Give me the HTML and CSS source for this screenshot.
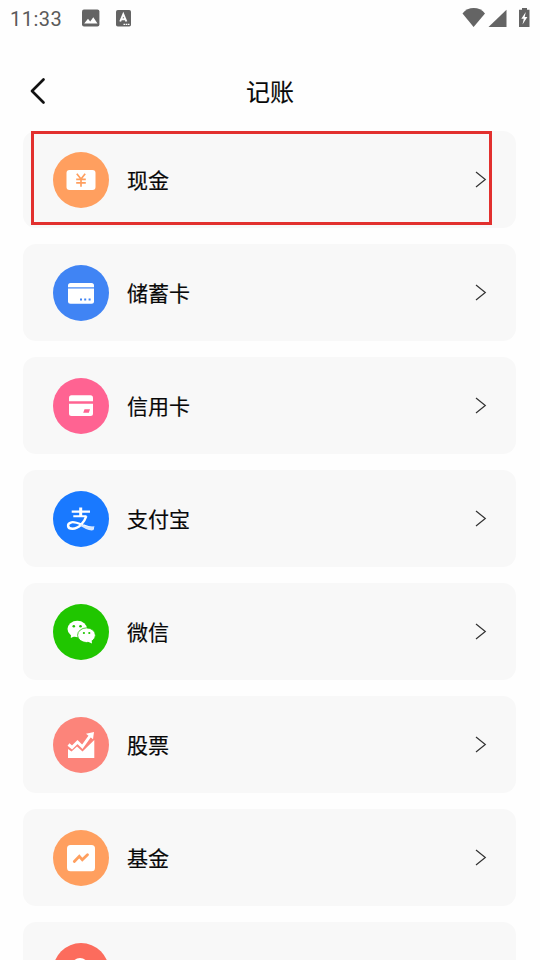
FILE: index.html
```
<!DOCTYPE html>
<html lang="zh-CN">
<head>
<meta charset="utf-8">
<title>记账</title>
<link rel="stylesheet" href="styles.css">
</head>
<body>
<div class="status">
  <span class="time">11:33</span>
  <svg class="photo" width="18" height="18" viewBox="0 0 18 18"><rect y=".5" width="17.400" height="17" rx="2" fill="#646464"/><path d="M2.200 14.500 6 9.700 8.200 12.500 11.300 8.300 15.500 14.500Z" fill="#fff"/></svg>
  <svg class="lang" width="16" height="17" viewBox="0 0 16 17"><rect width="15" height="16.500" rx="1.800" fill="#646464"/><path d="M4.200 11.500 7.300 4.200 10.400 11.500M5.400 9.300H9.200" fill="none" stroke="#fff" stroke-width="1.900"/><path d="M7.500 14.300H14" stroke="#fff" stroke-width="1.200" stroke-dasharray="1.600 .6"/></svg>
  <svg class="system" width="70" height="22" viewBox="0 0 70 22"><g fill="#646464"><path d="M.5 6.500C6-.7 17.500-.7 23 6.500L11.600 20Z"/><path d="M26.500 20 44.500 2.700V20Z"/><path d="M57 2.700H60V1H65V2.700H67.500V20H57Z"/></g><path d="M63.800 5 59.300 11.800H61.800L60.500 17.500 65.400 10H62.700Z" fill="#fff"/></svg>
</div>
<header class="header">
  <svg class="back" width="18" height="28" viewBox="0 0 18 28"><path d="M15.500 2.500 4 14 15.500 25.500" fill="none" stroke="#111" stroke-width="2.700" stroke-linecap="round" stroke-linejoin="round"/></svg>
  <h1>记账</h1>
</header>
<main class="list">
  <div class="card">
    <svg class="icon" viewBox="0 0 56 56"><circle cx="28" cy="28" r="28" fill="#ff9f5f"/><rect x="13.500" y="18" width="29" height="20" rx="3" fill="#fff"/><path d="M23.800 21.800 28 27 32.200 21.800M28 27V34.700M23.200 27.300H32.800M23.200 30.800H32.800" fill="none" stroke="#ff9f5f" stroke-width="1.700"/></svg>
    <span class="name">现金</span>
    <svg class="arrow" viewBox="0 0 12 18"><path d="M1 1 10.300 8.500 1 16"/></svg>
    <div class="highlight"></div>
  </div>
  <div class="card">
    <svg class="icon" viewBox="0 0 56 56"><circle cx="28" cy="28" r="28" fill="#4084f4"/><rect x="15" y="18" width="26" height="20.700" rx="2.500" fill="#fff"/><path d="M15 22.900H41" stroke="#4084f4" stroke-width="1.200"/><path d="M27 33.500h2v2h-2zM31.200 33.500h2v2h-2zM35.600 33.500h2v2h-2z" fill="#4084f4"/></svg>
    <span class="name">储蓄卡</span>
    <svg class="arrow" viewBox="0 0 12 18"><path d="M1 1 10.300 8.500 1 16"/></svg>
  </div>
  <div class="card">
    <svg class="icon" viewBox="0 0 56 56"><circle cx="28" cy="28" r="28" fill="#ff6392"/><path d="M16 23.300V20Q16 17.200 18.500 17.200H37.500Q40 17.200 40 20V23.300ZM16 25.800H40V35.500Q40 38 37.500 38H18.500Q16 38 16 35.500Z" fill="#fff"/><path d="M31.500 31.200H37L35.800 34.800H30.200Z" fill="#ff6392"/></svg>
    <span class="name">信用卡</span>
    <svg class="arrow" viewBox="0 0 12 18"><path d="M1 1 10.300 8.500 1 16"/></svg>
  </div>
  <div class="card">
    <svg class="icon" viewBox="0 0 56 56"><circle cx="28" cy="28" r="28" fill="#1979ff"/><g fill="none" stroke="#fff"><path d="M18.700 20.600H37M20.300 25.200H33.500" stroke-width="2.100"/><path d="M27.700 16.500V25" stroke-width="3"/><path d="M33.300 25.200C31.500 31 26 37.800 19.500 37.800 14 37.800 13.500 32.500 18.500 31.300 24.500 30 31 36.500 41 37.200" stroke-width="2.400"/></g><path d="M28 33.300C33 36 37 35.800 41.500 35.300L40.200 39.300C36 40 31.500 37.500 27.500 35Z" fill="#d6e7ff"/></svg>
    <span class="name">支付宝</span>
    <svg class="arrow" viewBox="0 0 12 18"><path d="M1 1 10.300 8.500 1 16"/></svg>
  </div>
  <div class="card">
    <svg class="icon" viewBox="0 0 56 56"><circle cx="28" cy="28" r="28" fill="#20c600"/><path d="M18 30 17.800 34 22 32Z" fill="#fff"/><ellipse cx="24.300" cy="25" rx="9.800" ry="8.300" fill="#fff"/><ellipse cx="33.500" cy="31.200" rx="8.900" ry="7.300" fill="#fff" stroke="#20c600" stroke-width=".8"/><path d="M34.500 37.500 39 39.500 38.500 35.500Z" fill="#fff"/><g fill="#20c600"><circle cx="20.800" cy="22.300" r="1.300"/><circle cx="27.500" cy="22.300" r="1.300"/><circle cx="30.900" cy="29" r="1.100"/><circle cx="36.300" cy="29" r="1.100"/></g></svg>
    <span class="name">微信</span>
    <svg class="arrow" viewBox="0 0 12 18"><path d="M1 1 10.300 8.500 1 16"/></svg>
  </div>
  <div class="card">
    <svg class="icon" viewBox="0 0 56 56"><circle cx="28" cy="28" r="28" fill="#fc847a"/><path d="M15 41V32L18.500 34.500 24 29.500 29.500 34.500 41.300 23V41Z" fill="#fff"/><path d="M15.500 27.500 19 30.500 24.500 25 29.300 29.800 37 19" fill="none" stroke="#fff" stroke-width="3"/><path d="M33 16.800 41 15 40 22.300Z" fill="#fff"/></svg>
    <span class="name">股票</span>
    <svg class="arrow" viewBox="0 0 12 18"><path d="M1 1 10.300 8.500 1 16"/></svg>
  </div>
  <div class="card">
    <svg class="icon" viewBox="0 0 56 56"><circle cx="28" cy="28" r="28" fill="#ff9f5f"/><rect x="14" y="15" width="28" height="26.300" rx="3.500" fill="#fff"/><path d="M21.300 31.500 26.300 26.300 29.300 29.800 34.500 24.700" fill="none" stroke="#ff9f5f" stroke-width="2.800" stroke-linecap="round"/></svg>
    <span class="name">基金</span>
    <svg class="arrow" viewBox="0 0 12 18"><path d="M1 1 10.300 8.500 1 16"/></svg>
  </div>
  <div class="card">
    <svg class="icon" viewBox="0 0 56 56"><circle cx="28" cy="28" r="28" fill="#fc6c5d"/><circle cx="27" cy="23.500" r="8.500" fill="#fff"/></svg>
  </div>
</main>
</body>
</html>
```
FILE: styles.css
```
* { box-sizing: border-box; }
body {
  margin: 0;
  height: 960px;
  overflow: hidden;
  background: #fefefe;
  color: #080808;
  font-family: "Noto Sans CJK SC", sans-serif;
}
svg { display: block; flex: none; }
.status {
  display: flex;
  align-items: center;
  height: 36px;
  padding: 0 8px 0 10px;
}
.time {
  width: 72px;
  padding-top: 2px;
  font: 20px/36px Roboto, sans-serif;
  letter-spacing: .5px;
  color: #5a5a5a;
}
.lang { margin-left: 16px; }
.system { margin-left: auto; }
.header {
  display: grid;
  grid-template-columns: 60px 1fr 60px;
  align-items: center;
  height: 95px;
  padding-top: 14px;
}
.back { margin-left: 28px; }
h1 {
  margin: 0;
  text-align: center;
  font-size: 24px;
  line-height: 36px;
  font-weight: 400;
  -webkit-text-stroke: .15px currentColor;
}
.list {
  display: flex;
  flex-direction: column;
  gap: 16px;
  height: 829px;
  overflow: hidden;
  padding: 0 24px 0 23px;
}
.card {
  position: relative;
  display: flex;
  align-items: center;
  flex: none;
  height: 97px;
  padding: 0 29px 0 30px;
  border-radius: 13px;
  background: #f8f8f8;
}
.icon { width: 56px; height: 56px; }
.name {
  margin-left: 18px;
  padding-bottom: 2px;
  font-size: 21px;
  line-height: 32px;
  font-weight: 400;
  -webkit-text-stroke: .2px currentColor;
}
.arrow {
  width: 12px;
  height: 18px;
  margin-left: auto;
  fill: none;
  stroke: #333;
  stroke-width: 1.2;
}
.highlight {
  position: absolute;
  left: 8px;
  top: 0;
  width: 461px;
  height: 94px;
  border: 3px solid #e2302e;
}
```
